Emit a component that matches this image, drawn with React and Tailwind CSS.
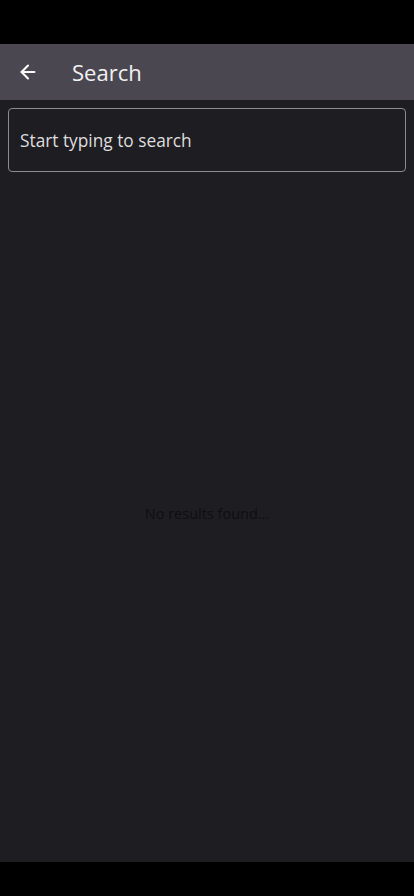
import { ArrowLeft } from 'lucide-react';

export default function App() {
  return (
    <div className="w-[414px] h-[896px] bg-black flex flex-col" style={{ fontFamily: '"Open Sans", sans-serif' }}>
      <div className="h-[44px] shrink-0 bg-black" />
      <div className="h-[56px] shrink-0 bg-[#4a4751] flex items-center">
        <button className="w-[56px] h-[56px] flex items-center justify-center text-white">
          <ArrowLeft size={22} strokeWidth={2.25} />
        </button>
        <span className="ml-[16px] mt-[1px] text-[22px] text-[#f2f2f2]">Search</span>
      </div>
      <div className="flex-1 bg-[#1e1d22] flex flex-col">
        <div className="px-[8px] pt-[8px]">
          <input
            placeholder="Start typing to search"
            className="w-full h-[64px] rounded-[4px] border border-[#8c8b90] bg-transparent px-[11px] text-[17.3px] text-[#e6e6e6] placeholder:text-[#dedede] outline-none"
          />
        </div>
        <div className="flex-1 flex items-center justify-center">
          <span className="text-[14.5px] text-[#0f0f12] -mt-[6px]">No results found...</span>
        </div>
      </div>
      <div className="h-[34px] shrink-0 bg-black" />
    </div>
  );
}
